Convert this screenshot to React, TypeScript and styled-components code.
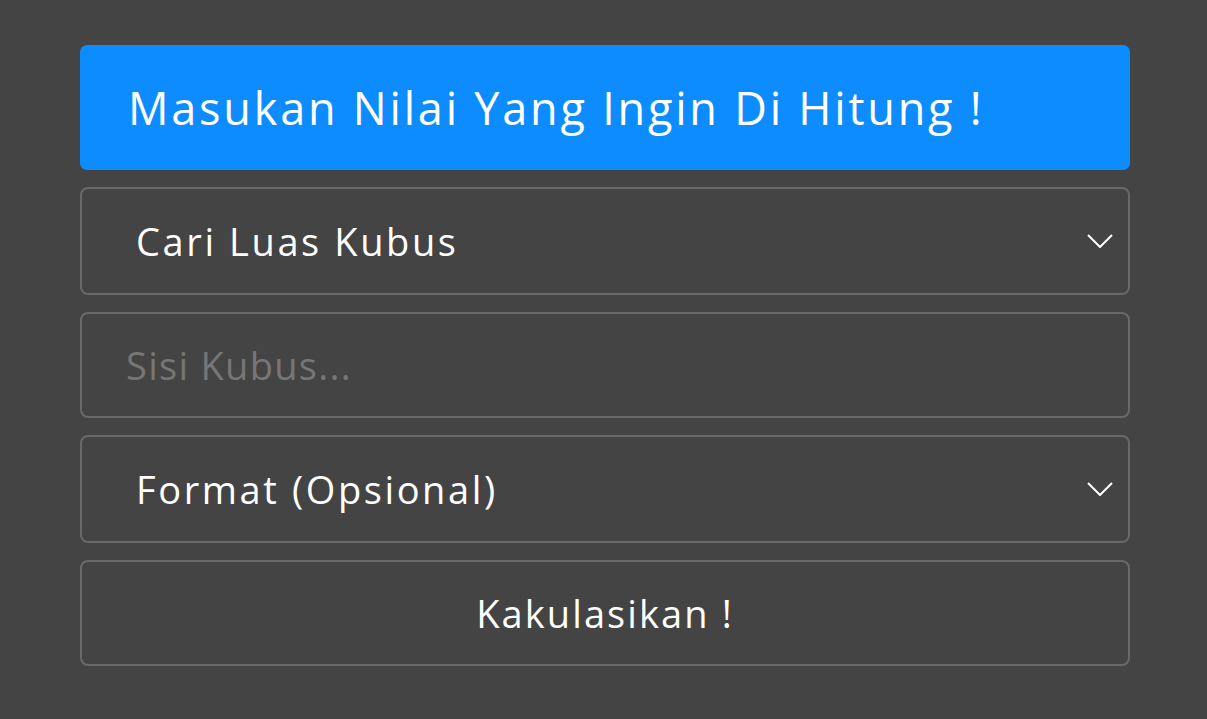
import React from "react";
import styled, { createGlobalStyle } from "styled-components";

const Global = createGlobalStyle`
  html, body { margin: 0; padding: 0; background: #444444; }
  body { font-family: "Open Sans", "Noto Sans", sans-serif; }
  * { box-sizing: border-box; }
`;

const Page = styled.div`
  min-height: 719px;
  padding: 45px 77px 0 80px;
`;

const Form = styled.form`
  display: flex;
  flex-direction: column;
  gap: 17px;
  width: 1050px;
`;

const Header = styled.div`
  height: 125px;
  background: #0d8cff;
  border-radius: 7px;
  display: flex;
  align-items: center;
  padding-left: 48px;
  color: #ffffff;
  font-size: 45px;
  font-weight: 400;
  letter-spacing: 2.8px;
`;

const Field = styled.div`
  position: relative;
  height: 108px;
`;

const Select = styled.select`
  appearance: none;
  -webkit-appearance: none;
  width: 100%;
  height: 100%;
  background: transparent;
  border: 2px solid #696969;
  border-radius: 8px;
  color: #ffffff;
  font-family: inherit;
  font-size: 38px;
  letter-spacing: 2.6px;
  padding: 0 0 0 54px;
  outline: none;
`;

const Chevron = styled.svg`
  position: absolute;
  right: 17px;
  top: 50%;
  margin-top: -7px;
  width: 26px;
  height: 14px;
  pointer-events: none;
`;

const Input = styled.input`
  width: 100%;
  height: 106px;
  background: transparent;
  border: 2px solid #696969;
  border-radius: 8px;
  color: #ffffff;
  font-family: inherit;
  font-size: 38px;
  letter-spacing: 1.3px;
  padding: 0 0 0 44px;
  outline: none;
  &::placeholder { color: #767676; }
`;

const Button = styled.button`
  height: 106px;
  background: transparent;
  border: 2px solid #696969;
  border-radius: 8px;
  color: #ffffff;
  font-family: inherit;
  font-size: 38px;
  letter-spacing: 2.1px;
  cursor: pointer;
`;

const Arrow = () => (
  <Chevron viewBox="0 0 26 14">
    <path d="M1 1 L13 13 L25 1" fill="none" stroke="#ffffff" strokeWidth="2" />
  </Chevron>
);

export default function App() {
  return (
    <Page>
      <Global />
      <Form onSubmit={(e) => e.preventDefault()}>
        <Header>Masukan Nilai Yang Ingin Di Hitung !</Header>
        <Field>
          <Select defaultValue="luas">
            <option value="luas">Cari Luas Kubus</option>
            <option value="volume">Cari Volume Kubus</option>
          </Select>
          <Arrow />
        </Field>
        <Input placeholder="Sisi Kubus..." />
        <Field>
          <Select defaultValue="">
            <option value="">Format (Opsional)</option>
            <option value="cm">cm</option>
          </Select>
          <Arrow />
        </Field>
        <Button type="submit">Kakulasikan !</Button>
      </Form>
    </Page>
  );
}
